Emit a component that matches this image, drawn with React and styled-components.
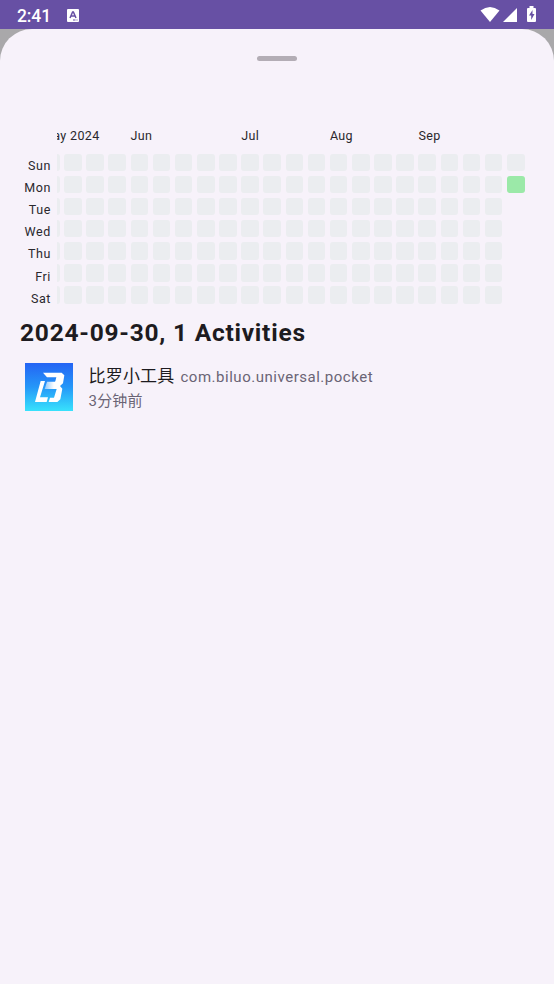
import React from 'react'
import styled, { createGlobalStyle } from 'styled-components'

const GlobalStyle = createGlobalStyle`
  * {
    box-sizing: border-box;
  }
  body {
    margin: 0;
    background: #f7f2fa;
    font-family: Roboto, "Noto Sans CJK SC", sans-serif;
  }
`

const Screen = styled.div`
  height: 984px;
  display: flex;
  flex-direction: column;
  overflow: hidden;
  background: #a9a8aa;
`

const StatusBar = styled.header`
  height: 29px;
  flex: none;
  display: flex;
  align-items: center;
  padding: 1px 17px 0;
  background: #6750a4;
  color: #fff;
`

const Clock = styled.span`
  width: 50px;
  padding-top: 1px;
  font-size: 17.5px;
  font-weight: 500;
  line-height: 20px;
  letter-spacing: -0.1px;
`

const StatusIcons = styled.div`
  display: flex;
  align-items: center;
  margin: -1px 0 0 auto;
`

const Sheet = styled.main`
  flex: 1;
  background: #f7f2fa;
  border-radius: 32px 32px 0 0;
`

const Handle = styled.div`
  width: 40px;
  height: 5px;
  margin: 27px auto 0;
  border-radius: 3px;
  background: #b3adb5;
`

const Calendar = styled.section`
  display: flex;
  height: 177px;
  margin-top: 65.5px;
  padding-right: 29.5px;
  color: #2a282d;
  font-size: 12.5px;
  letter-spacing: 0.6px;
`

const DayLabels = styled.div`
  width: 57px;
  flex: none;
  padding: 30.4px 6px 0 0;
  text-align: right;
`

const DayLabel = styled.div`
  height: 22.15px;
  line-height: 18px;
`

const Weeks = styled.div`
  flex: 1;
  min-width: 0;
  display: flex;
  justify-content: flex-end;
  gap: 4.65px;
  overflow: hidden;
`

const Week = styled.div`
  width: 17.5px;
  flex: none;
`

const Month = styled.div`
  height: 27px;
  line-height: 18px;
  letter-spacing: 0.35px;
  white-space: nowrap;
`

const Cell = styled.div`
  height: 17.5px;
  margin-bottom: 4.65px;
  border-radius: 3px;
  background: ${(props) => (props.$active ? '#9be9a8' : '#ebedf0')};
`

const Title = styled.h1`
  margin: 13px 0 0 20px;
  color: #1d1b20;
  font-size: 24.5px;
  font-weight: 700;
  line-height: 32px;
  letter-spacing: 0.76px;
`

const AppRow = styled.div`
  display: flex;
  align-items: center;
  gap: 15.5px;
  padding: 12.5px 25px;
`

const AppInfo = styled.div`
  padding-top: 2.5px;
  line-height: 24px;
`

const AppName = styled.div`
  color: #1d1b20;
  font-size: 17px;
  letter-spacing: 0.2px;
`

const PackageName = styled.span`
  margin-left: 6px;
  color: #6a6475;
  font-size: 15px;
  letter-spacing: 0.52px;
`

const Time = styled.div`
  color: #6a6475;
  font-size: 15px;
  letter-spacing: 0.2px;
`

const days = ['Sun', 'Mon', 'Tue', 'Wed', 'Thu', 'Fri', 'Sat']
const months = { 0: 'May 2024', 4: 'Jun', 9: 'Jul', 13: 'Aug', 17: 'Sep' }

const weeks = Array.from({ length: 22 }, (_, index) => ({
  month: months[index],
  days: index === 21 ? 2 : 7, // 마지막 주는 오늘까지만 표시
}))

const KeyboardIcon = () => (
  <svg width="12" height="13" viewBox="0 0 12 13">
    <rect width="12" height="13" rx="1" fill="#fff" />
    <path d="M3 9 5.6 3h.8L9 9M4 7h4" fill="none" stroke="#6750a4" strokeWidth="1.5" />
    <path d="M6 11h2.5M9.5 11h1" stroke="#6750a4" strokeWidth="1" />
  </svg>
)

const SystemIcons = () => (
  <svg width="57" height="17" viewBox="0 0 57 17" fill="#fff">
    <path d="M.5 4.5Q10 -2.5 19.5 4.5L10 16Z" />
    <path d="M37 2V16H23Z" />
    <path d="M49.5 2V0h4v2H55q1 0 1 1V15q0 1-1 1h-7q-1 0-1-1V3q0-1 1-1Z" />
    <path d="M52.5 4 49 9.5h2.2V14L54.5 8h-2Z" fill="#6750a4" />
  </svg>
)

const AppLogo = () => (
  <svg width="48" height="48" viewBox="0 0 144 144">
    <defs>
      <linearGradient id="logoBack" x1="0" y1="0" x2="0" y2="1">
        <stop offset="0" stopColor="#2464f4" />
        <stop offset="0.5" stopColor="#2597f8" />
        <stop offset="1" stopColor="#38e2fc" />
      </linearGradient>
      <linearGradient id="logoFold" x1="0" y1="0" x2="1" y2="0">
        <stop offset="0" stopColor="#8fc8fb" />
        <stop offset="0.8" stopColor="#fff" />
      </linearGradient>
    </defs>
    <rect width="144" height="144" fill="url(#logoBack)" />
    <path d="M47 54H60L45 103H69L65 117H30Z" fill="#fff" />
    <path d="M54 29H110L118 37 114 61 105 69 112 77 106 109 97 117H71L75 104H87L95 78H78L84 65 91 55 94 43H66Z" fill="#fff" />
    <path d="M66 56H94L86 78H59Z" fill="url(#logoFold)" />
  </svg>
)

const ActivityCalendar = () => {
  return (
    <Calendar>
      <DayLabels>
        {days.map((day) => (
          <DayLabel key={day}>{day}</DayLabel>
        ))}
      </DayLabels>
      <Weeks>
        {weeks.map((week, index) => (
          <Week key={index}>
            <Month>{week.month}</Month>
            {days.slice(0, week.days).map((day) => (
              <Cell key={day} $active={index === 21 && day === 'Mon'} />
            ))}
          </Week>
        ))}
      </Weeks>
    </Calendar>
  )
}

const App = () => {
  return (
    <Screen>
      <GlobalStyle />
      <StatusBar>
        <Clock>2:41</Clock>
        <KeyboardIcon />
        <StatusIcons>
          <SystemIcons />
        </StatusIcons>
      </StatusBar>
      <Sheet>
        <Handle />
        <ActivityCalendar />
        <Title>2024-09-30, 1 Activities</Title>
        <AppRow>
          <AppLogo />
          <AppInfo>
            <AppName>
              比罗小工具
              <PackageName>com.biluo.universal.pocket</PackageName>
            </AppName>
            <Time>3分钟前</Time>
          </AppInfo>
        </AppRow>
      </Sheet>
    </Screen>
  )
}

export default App
